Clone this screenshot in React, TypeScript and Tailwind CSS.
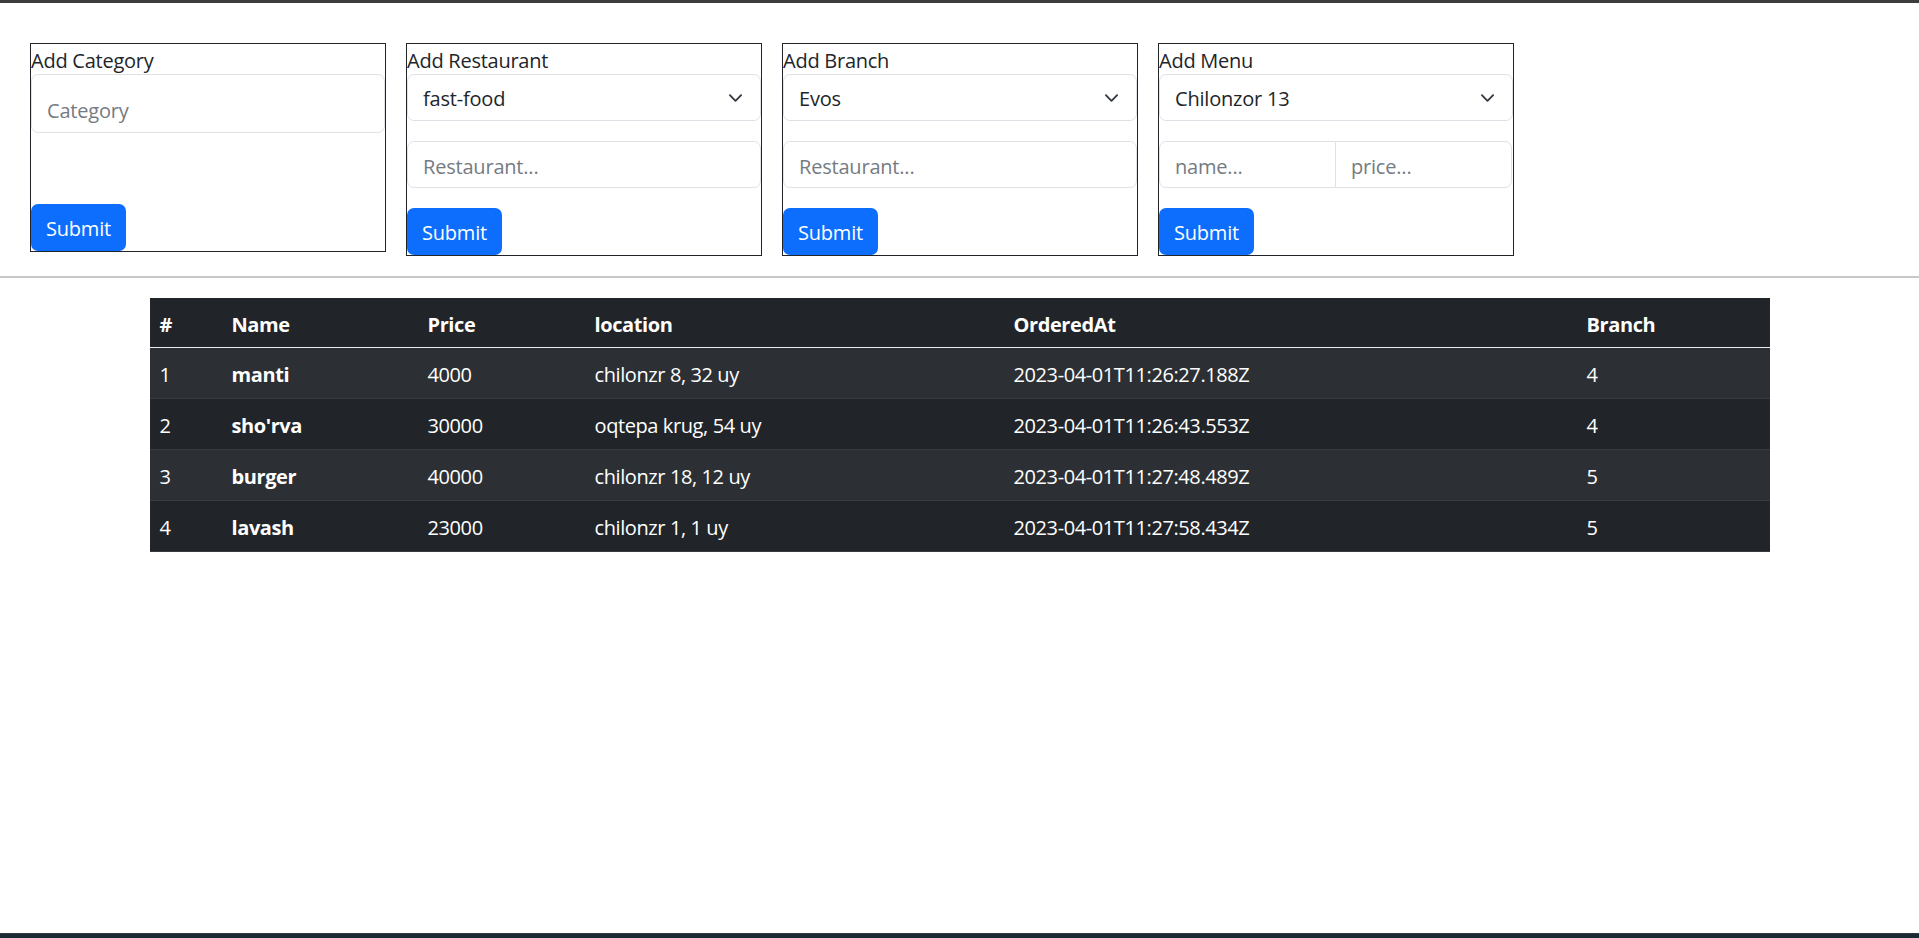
import React from "react";

const font = { fontFamily: '"Open Sans", "Noto Sans", sans-serif' };

function Chevron() {
  return (
    <svg
      viewBox="0 0 16 16"
      className="absolute right-[17px] top-1/2 -translate-y-1/2 w-[15px] h-[15px]"
      fill="none"
      stroke="#343a40"
      strokeWidth="2"
      strokeLinecap="round"
      strokeLinejoin="round"
    >
      <path d="m2 5 6 6 6-6" />
    </svg>
  );
}

function FakeSelect({ value }: { value: string }) {
  return (
    <div className="relative h-[47px] border border-[#dee2e6] rounded-[7px] bg-white pl-[15px] pt-[9px] text-[20px] leading-[30px] tracking-[-0.2px] text-[#212529]">
      {value}
      <Chevron />
    </div>
  );
}

function TextInput({ placeholder, className = "" }: { placeholder: string; className?: string }) {
  return (
    <input
      placeholder={placeholder}
      className={
        "block w-full h-[47px] border border-[#dee2e6] bg-white px-[15px] pt-[9px] pb-[6px] text-[20px] leading-[30px] tracking-[-0.2px] text-[#212529] placeholder:text-[#757b82] outline-none " +
        className
      }
    />
  );
}

function SubmitBtn() {
  return (
    <button className="h-[47px] w-[95px] rounded-[7px] bg-[#0d6efd] text-white text-[20px] leading-[30px] tracking-[-0.2px] text-left pl-[15px] pt-[2px]">
      Submit
    </button>
  );
}

function Card({ title, children }: { title: string; children: React.ReactNode }) {
  return (
    <div className="w-[356px] border border-[#212529] bg-white">
      <div className="h-[30px] text-[20px] leading-[33px] tracking-[-0.25px] text-[#212529]">{title}</div>
      {children}
    </div>
  );
}

const rows = [
  { id: 1, name: "manti", price: "4000", location: "chilonzr 8, 32 uy", at: "2023-04-01T11:26:27.188Z", branch: "4" },
  { id: 2, name: "sho'rva", price: "30000", location: "oqtepa krug, 54 uy", at: "2023-04-01T11:26:43.553Z", branch: "4" },
  { id: 3, name: "burger", price: "40000", location: "chilonzr 18, 12 uy", at: "2023-04-01T11:27:48.489Z", branch: "5" },
  { id: 4, name: "lavash", price: "23000", location: "chilonzr 1, 1 uy", at: "2023-04-01T11:27:58.434Z", branch: "5" },
];

const gridCols = "grid grid-cols-[72px_196px_167px_419px_573px_193px]";

export default function App() {
  return (
    <div className="min-h-screen flex flex-col bg-white" style={font}>
      <div className="h-[3px] bg-[#3b3c3e]" />
      <div className="flex items-start gap-[20px] pl-[30px] pt-[40px]">
        <Card title="Add Category">
          <input
            placeholder="Category"
            className="block w-full h-[59px] border border-[#dee2e6] rounded-[7px] px-[15px] pt-[20px] pb-[7px] text-[20px] leading-[30px] tracking-[-0.2px] text-[#212529] placeholder:text-[#757b82] outline-none"
          />
          <div className="h-[71px]" />
          <SubmitBtn />
        </Card>
        <Card title="Add Restaurant">
          <FakeSelect value="fast-food" />
          <div className="mt-[20px]">
            <TextInput placeholder="Restaurant..." className="rounded-[7px]" />
          </div>
          <div className="mt-[20px] flex">
            <SubmitBtn />
          </div>
        </Card>
        <Card title="Add Branch">
          <FakeSelect value="Evos" />
          <div className="mt-[20px]">
            <TextInput placeholder="Restaurant..." className="rounded-[7px]" />
          </div>
          <div className="mt-[20px] flex">
            <SubmitBtn />
          </div>
        </Card>
        <Card title="Add Menu">
          <FakeSelect value="Chilonzor 13" />
          <div className="mt-[20px] flex">
            <div className="w-1/2">
              <TextInput placeholder="name..." className="rounded-l-[7px]" />
            </div>
            <div className="w-1/2 -ml-px">
              <TextInput placeholder="price..." className="rounded-r-[7px]" />
            </div>
          </div>
          <div className="mt-[20px] flex">
            <SubmitBtn />
          </div>
        </Card>
      </div>

      <div className="mt-[20px] h-[2px] bg-[#c8c8c8]" />

      <div className="mt-[20px] mx-auto w-[1620px] text-white text-[20px] leading-[30px] tracking-[-0.4px]">
        <div className={gridCols + " bg-[#212529] h-[50px] font-bold border-b border-[#e9ecef]"}>
          <div className="px-[10px] pt-[12px]">#</div>
          <div className="px-[10px] pt-[12px]">Name</div>
          <div className="px-[10px] pt-[12px]">Price</div>
          <div className="px-[10px] pt-[12px]">location</div>
          <div className="px-[10px] pt-[12px]">OrderedAt</div>
          <div className="px-[10px] pt-[12px]">Branch</div>
        </div>
        {rows.map((r, i) => (
          <div
            key={r.id}
            className={
              gridCols +
              " h-[51px] border-b border-[#373b3e] " +
              (i % 2 === 0 ? "bg-[#2c3034]" : "bg-[#212529]")
            }
          >
            <div className="px-[10px] pt-[12px]">{r.id}</div>
            <div className="px-[10px] pt-[12px] font-bold">{r.name}</div>
            <div className="px-[10px] pt-[12px]">{r.price}</div>
            <div className="px-[10px] pt-[12px]">{r.location}</div>
            <div className="px-[10px] pt-[12px]">{r.at}</div>
            <div className="px-[10px] pt-[12px]">{r.branch}</div>
          </div>
        ))}
      </div>

      <div className="flex-1" />
      <div className="h-[5px] bg-[#1b2a30] border-t border-[#2c3d44]" />
    </div>
  );
}
